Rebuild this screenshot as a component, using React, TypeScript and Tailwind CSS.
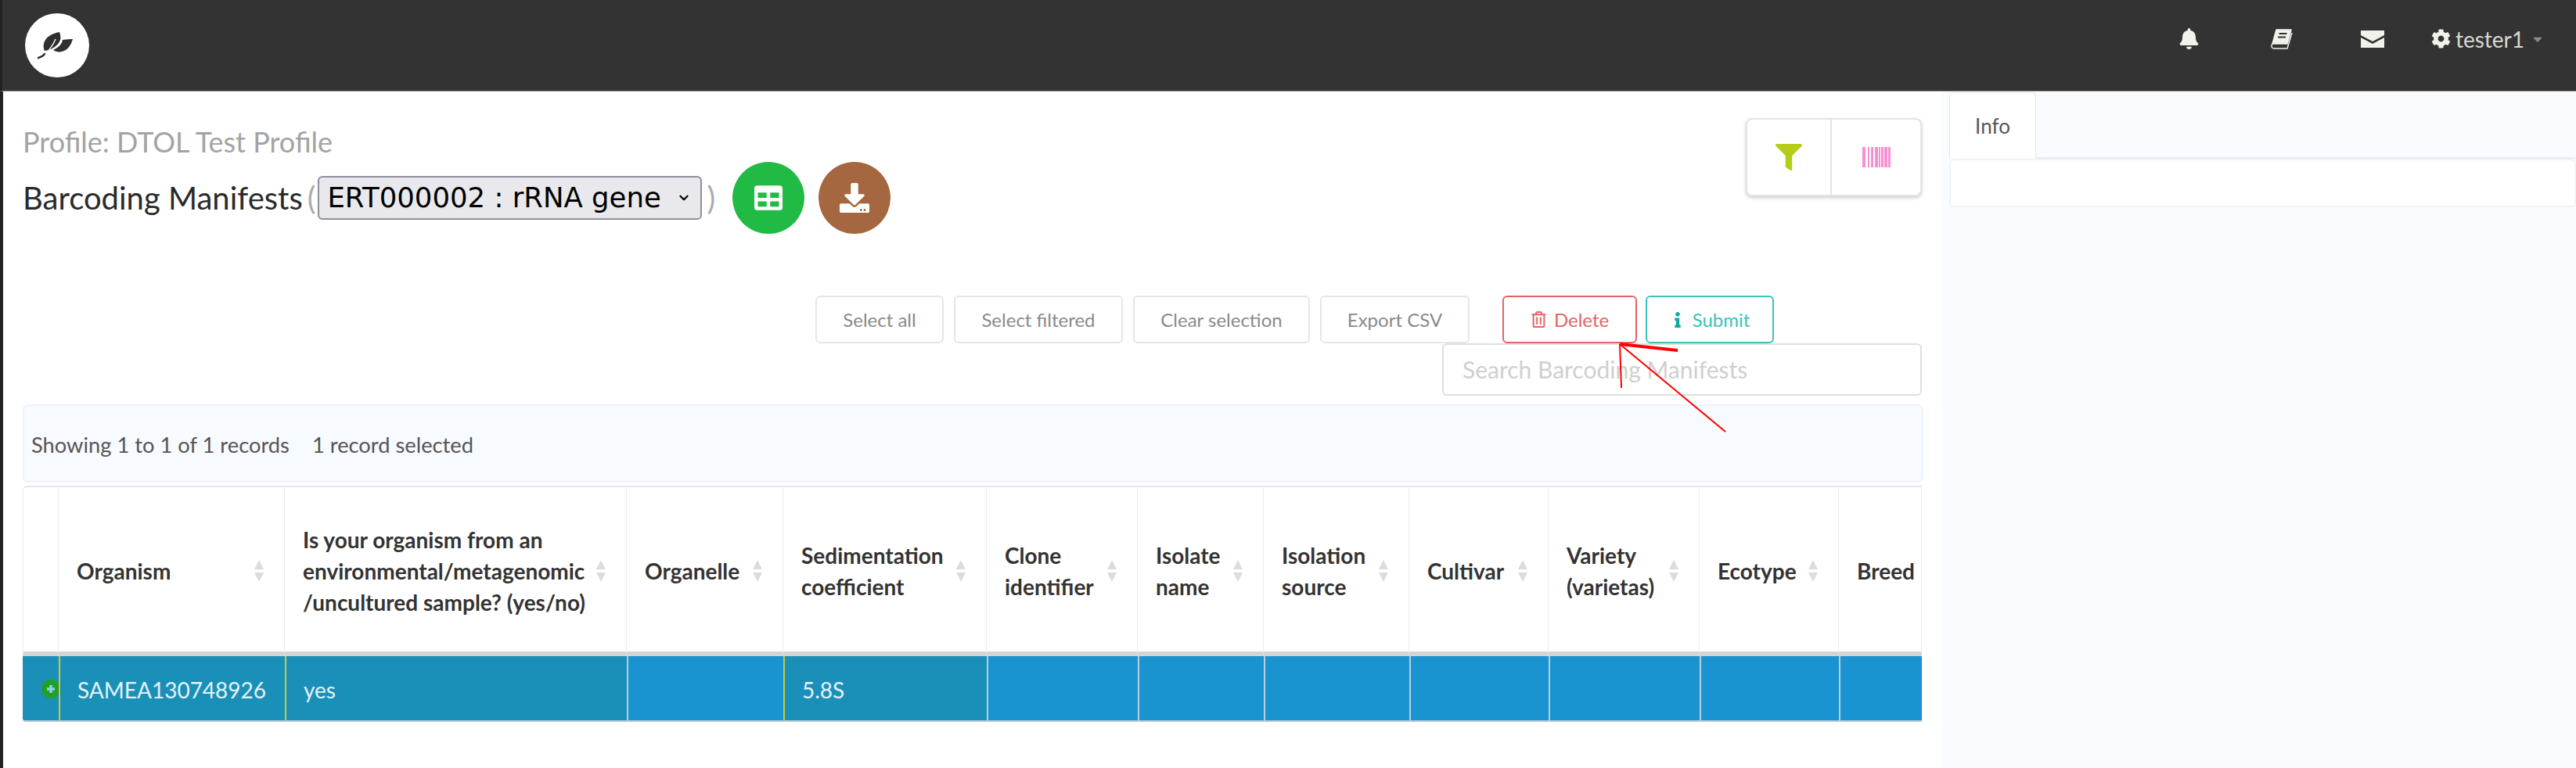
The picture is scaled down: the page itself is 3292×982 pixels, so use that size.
import { FaBell, FaCog, FaDownload, FaFilter, FaInfo, FaRegTrashAlt, FaTable, FaCaretDown } from 'react-icons/fa';
import { ChevronDown } from 'lucide-react';

const columns = [
  { width: 'w-[46px]', label: null },
  { width: 'w-[289px]', label: ['Organism'] },
  { width: 'w-[437px]', label: ['Is your organism from an', 'environmental/metagenomic', '/uncultured sample? (yes/no)'] },
  { width: 'w-[200px]', label: ['Organelle'] },
  { width: 'w-[260px]', label: ['Sedimentation', 'coefficient'] },
  { width: 'w-[193px]', label: ['Clone', 'identifier'] },
  { width: 'w-[161px]', label: ['Isolate', 'name'] },
  { width: 'w-[186px]', label: ['Isolation', 'source'] },
  { width: 'w-[178px]', label: ['Cultivar'] },
  { width: 'w-[193px]', label: ['Variety', '(varietas)'] },
  { width: 'w-[178px]', label: ['Ecotype'] },
  { width: 'w-[106px]', label: ['Breed'] },
];

const rowValues = ['', 'SAMEA130748926', 'yes', '', '5.8S', '', '', '', '', '', '', ''];
const sortedCols = [0, 1, 2, 4];

const SortArrows = () => (
  <span className="flex flex-col items-center gap-[4px] ml-1 shrink-0">
    <span className="w-0 h-0 border-x-[6px] border-x-transparent border-b-[12px] border-b-[#dcdcdc]" />
    <span className="w-0 h-0 border-x-[6px] border-x-transparent border-t-[12px] border-t-[#dcdcdc]" />
  </span>
);

const LeafLogo = () => (
  <svg viewBox="0 0 50 40" className="w-[52px] h-[40px]">
    <path d="M28 3c-10 2-18 6-20 15-1 3 0 7 1 9 7-1 17-5 20-14 1-3 0-7-1-10z" fill="#2f2f2f" />
    <path d="M32 13c6-1 10-1 13-1-2 7-6 14-14 16-4 1-8 0-11-2 6-3 11-7 12-13z" fill="#2f2f2f" />
    <path d="M1 36c3-1 6-2 9-5 6-6 10-12 13-19" fill="none" stroke="#f5f5f5" strokeWidth="1.5" />
    <path d="M1 36c3-1 6-2 8-5" fill="none" stroke="#2f2f2f" strokeWidth="2.5" strokeLinecap="round" />
  </svg>
);

const BookIcon = () => (
  <svg viewBox="0 0 28 26" className="w-[28px] h-[26px]">
    <path d="M7 1h19l-5 18H2z" fill="#f2f2ec" stroke="#f2f2ec" strokeWidth="1.5" strokeLinejoin="round" />
    <path d="M10.5 6h10M9 10.5h10" stroke="#333333" strokeWidth="2" />
    <path d="M2 19c-2 3-1 6 2 6h17l6-20" fill="none" stroke="#f2f2ec" strokeWidth="1.5" />
  </svg>
);

const MailIcon = () => (
  <svg viewBox="0 0 30 22" className="w-[30px] h-[22px]" fill="#f2f2ec">
    <path d="M0 0h30v6l-15 8L0 6zM0 9l15 8 15-8v13H0z" />
  </svg>
);

const BarcodeIcon = () => (
  <svg viewBox="0 0 36 26" className="w-[36px] h-[26px]" fill="#f690d0">
    <rect x="0" width="4" height="26" />
    <rect x="7" width="2" height="26" />
    <rect x="11" width="3" height="26" />
    <rect x="16" width="4" height="26" />
    <rect x="21" width="2" height="26" />
    <rect x="24" width="3" height="26" />
    <rect x="28" width="4" height="26" />
    <rect x="33" width="3" height="26" />
  </svg>
);

const PlusDot = () => (
  <svg viewBox="0 0 24 24" className="w-[24px] h-[24px]">
    <circle cx="12" cy="12" r="12" fill="#21a028" />
    <path d="M12 7v10M7 12h10" stroke="#8fd0e6" strokeWidth="3.5" />
  </svg>
);

const ActionButton = ({ label, width }: { label: string; width: string }) => (
  <button className={`${width} h-[61px] rounded-[6px] border-2 border-[#e6e6e6] bg-white text-[24px] text-[#8a8a8a]`}>{label}</button>
);

export default function App() {
  return (
    <div className="relative w-[3292px] h-[982px] overflow-hidden bg-white font-['Lato','Open_Sans',sans-serif]">
      <header className="h-[117px] flex items-center bg-[#333333] border-b border-[#8c8c8c] border-l-[3px] border-l-[#222222]">
        <div className="ml-[29px] w-[82px] h-[82px] rounded-full bg-white flex items-center justify-center">
          <LeafLogo />
        </div>
        <nav className="ml-auto flex items-center text-[#f2f2ec] mb-[17px]">
          <FaBell className="text-[27px] mr-[91px]" />
          <BookIcon />
          <div className="ml-[87px]"><MailIcon /></div>
          <FaCog className="text-[25px] ml-[60px]" />
          <span className="ml-[6px] text-[28px] text-[#d8d8d4]">tester1</span>
          <FaCaretDown className="text-[18px] ml-[8px] mr-[40px] text-[#8a8a8a]" />
        </nav>
      </header>

      <div className="flex h-[865px]">
        <div className="w-[4px] bg-[#222222] shrink-0" />
        <main className="w-[2477px] shrink-0 pl-[25px] pr-[25px]">
          <div className="flex justify-between h-[203px]">
            <div>
              <h2 className="mt-[46px] text-[36px] leading-[36px] text-[#a3a3a3]">Profile: DTOL Test Profile</h2>
              <div className="mt-[8px] flex items-center text-[40px] text-[#2a2a2a]">
                <span>Barcoding Manifests</span>
                <span className="ml-[6px] text-[#aaaaaa]">(</span>
                <div className="ml-[3px] w-[491px] h-[56px] rounded-[6px] border-2 border-[#8f8f9d] bg-[#e9e9ed] flex items-center justify-between pl-[10px] pr-[12px] font-['DejaVu_Sans',sans-serif] text-[35.5px] text-black">
                  <span>ERT000002 : rRNA gene</span>
                  <ChevronDown className="w-[18px] h-[18px]" strokeWidth={3} />
                </div>
                <span className="ml-[6px] text-[#aaaaaa]">)</span>
                <span className="ml-[22px] w-[92px] h-[92px] rounded-full bg-[#21ba45] flex items-center justify-center text-white"><FaTable className="text-[36px]" /></span>
                <span className="ml-[18px] w-[92px] h-[92px] rounded-full bg-[#a5673f] flex items-center justify-center text-white"><FaDownload className="text-[38px]" /></span>
              </div>
            </div>
            <div className="mt-[34px] w-[225px] h-[100px] flex rounded-[8px] border-2 border-[#e4e4e4] shadow-[0_2px_4px_rgba(0,0,0,0.2)] bg-white">
              <div className="w-[108px] flex items-center justify-center border-r-2 border-[#e4e4e4]"><FaFilter className="text-[34px] text-[#b5cc18]" /></div>
              <div className="flex-1 flex items-center justify-center"><BarcodeIcon /></div>
            </div>
          </div>

          <div className="flex flex-col items-end">
            <div className="mt-[58px] flex w-full justify-end pr-[189px]">
              <div className="flex gap-[13px]">
                <ActionButton label="Select all" width="w-[164px]" />
                <ActionButton label="Select filtered" width="w-[216px]" />
                <ActionButton label="Clear selection" width="w-[226px]" />
                <ActionButton label="Export CSV" width="w-[191px]" />
              </div>
              <button className="ml-[42px] w-[172px] h-[61px] rounded-[6px] border-2 border-[#e46464] bg-white text-[24px] text-[#e46464] flex items-center justify-center gap-[9px]"><FaRegTrashAlt className="text-[21px]" />Delete</button>
              <button className="ml-[11px] w-[164px] h-[61px] rounded-[6px] border-2 border-[#38c4bc] bg-white text-[24px] text-[#38c4bc] flex items-center justify-center gap-[9px]"><FaInfo className="text-[20px] text-[#10a8a0]" />Submit</button>
            </div>
            <div className="w-[613px] h-[67px] rounded-[6px] border-2 border-[#dedede] flex items-center pl-[24px] text-[30px] text-[#cfcfcf] mr-0">Search Barcoding Manifests</div>
          </div>

          <div className="mt-[11px] w-[2429px] h-[100px] rounded-[6px] border-2 border-[#edf3fc] bg-[#f7faff] flex items-center pt-[4px] pl-[9px] gap-[29px] text-[27.3px] text-[#555555]">
            <span>Showing 1 to 1 of 1 records</span>
            <span>1 record selected</span>
          </div>

          <div className="mt-[4px] w-[2427px] overflow-hidden">
            <table className="table-fixed w-[2427px] border-separate border-spacing-0">
              <colgroup>
                {columns.map((c, i) => <col key={i} className={c.width} />)}
              </colgroup>
              <thead>
                <tr className="h-[218px]">
                  {columns.map((c, i) => (
                    <th key={i} className={`${i === 0 ? 'rounded-tl-[6px] border-l' : ''} border-t-2 border-b-[6px] border-r border-t-[#e6e6e6] border-b-[#d4d4d4] border-r-[#ececec] border-l-[#ececec] pl-[23px] pr-[26px] pt-[4px] text-left text-[28px] leading-[40px] font-bold text-[#333333]`}>
                      {c.label && (
                        <div className="flex items-center justify-between whitespace-nowrap">
                          <span>{c.label.map((line) => <div key={line}>{line}</div>)}</span>
                          {c.label[0] !== 'Breed' && <SortArrows />}
                        </div>
                      )}
                    </th>
                  ))}
                </tr>
              </thead>
              <tbody>
                <tr className="h-[84px]">
                  {rowValues.map((v, i) => {
                    const sorted = sortedCols.includes(i);
                    return (
                      <td key={i} className={`${sorted ? 'bg-[#1a90b8]' : 'bg-[#1a94d0]'} ${i > 0 ? (sorted ? 'border-l-2 border-l-[#c9c93e]' : 'border-l-2 border-l-[#b8cfdc]') : 'rounded-bl-[4px]'} border-b-2 border-b-[#b4cbd8] px-[22px] pt-[4px] text-[28px] text-[#e4f3f8] relative`}>
                        {i === 0 ? <span className="absolute right-[-2px] top-[30px] z-0"><PlusDot /></span> : v}
                      </td>
                    );
                  })}
                </tr>
              </tbody>
            </table>
          </div>
        </main>

        <aside className="flex-1 bg-[#f9fbfe] pl-[10px]">
          <div className="mt-[1px] flex h-[85px] border-b-2 border-[#e6ecf5]">
            <div className="w-[111px] h-[85px] rounded-t-[6px] border border-b-0 border-[#e6e6e6] bg-white flex items-center justify-center text-[26px] text-[#555555]">Info</div>
          </div>
          <div className="h-[62px] rounded-[6px] border-2 border-[#edf3fc] bg-white" />
        </aside>
      </div>

      {/* red annotation drawn over the page */}
      <svg className="absolute left-0 top-0 pointer-events-none" width="3292" height="982">
        <path d="M2070 440 L2144 448" stroke="#ff0000" strokeWidth="4" />
        <path d="M2070 440 L2072 496" stroke="#ff0000" strokeWidth="2" />
        <path d="M2070 440 L2205 552" stroke="#ff0000" strokeWidth="2" />
      </svg>
    </div>
  );
}
